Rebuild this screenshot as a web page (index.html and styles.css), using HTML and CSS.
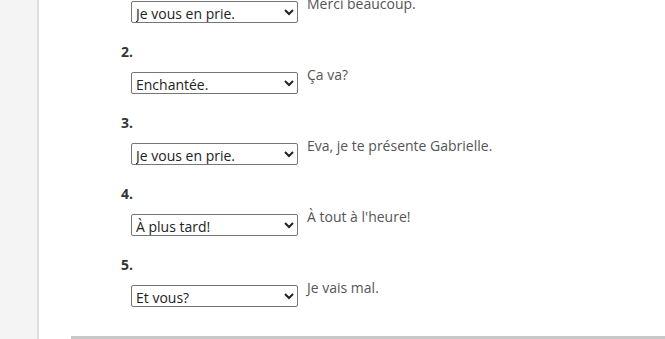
FILE: index.html
```html
<!DOCTYPE html>
<html lang="fr">
<head>
  <meta charset="UTF-8" />
  <title>Exercice</title>
  <link rel="stylesheet" href="styles.css">
</head>
<body>
  <div class="page">
    <div class="sidebar"></div>
    <div class="main">
      <div class="questions">
        <div class="item">
          <div class="num">1.</div>
          <div class="row">
            <select class="choice"><option>Je vous en prie.</option></select>
            <span class="answer">Merci beaucoup.</span>
          </div>
        </div>
        <div class="item">
          <div class="num">2.</div>
          <div class="row">
            <select class="choice"><option>Enchantée.</option></select>
            <span class="answer">Ça va?</span>
          </div>
        </div>
        <div class="item">
          <div class="num">3.</div>
          <div class="row">
            <select class="choice"><option>Je vous en prie.</option></select>
            <span class="answer">Eva, je te présente Gabrielle.</span>
          </div>
        </div>
        <div class="item">
          <div class="num">4.</div>
          <div class="row">
            <select class="choice"><option>À plus tard!</option></select>
            <span class="answer">À tout à l'heure!</span>
          </div>
        </div>
        <div class="item">
          <div class="num">5.</div>
          <div class="row">
            <select class="choice"><option>Et vous?</option></select>
            <span class="answer">Je vais mal.</span>
          </div>
        </div>
      </div>
    </div>
  </div>
</body>
</html>
```

FILE: styles.css
```css
body {
  margin: 0;
  font-family: "Open Sans", Arial, sans-serif;
  font-size: 14px;
  color: #444;
  background: #fff;
  overflow: hidden;
}

.page {
  display: flex;
  height: 339px;
  overflow: hidden;
}

.sidebar {
  width: 37px;
  background-color: #f4f4f4;
  border-right: 2px solid #dedede;
  flex-shrink: 0;
}

.main {
  flex: 1;
  padding-left: 32px;
}

.questions {
  margin-top: -29px;
  padding-left: 50px;
  padding-bottom: 10px;
  border-bottom: 3px solid #c8c8c8;
}

.item {
  padding-bottom: 19px;
}

.num {
  font-weight: 700;
  font-size: 14px;
  line-height: 20px;
  color: #333;
}

.row {
  display: flex;
  align-items: flex-start;
  gap: 9px;
  margin-left: 10px;
  margin-top: 3px;
}

.choice {
  margin: 7px 0 0;
  width: 167px;
  height: 22px;
  font-family: "Open Sans", Arial, sans-serif;
  font-size: 14px;
  color: #222;
  background: #fff;
  border: 1px solid #767676;
  border-radius: 2px;
  padding: 1px 0 0;
}

.answer {
  line-height: 20px;
  color: #555;
}
```
